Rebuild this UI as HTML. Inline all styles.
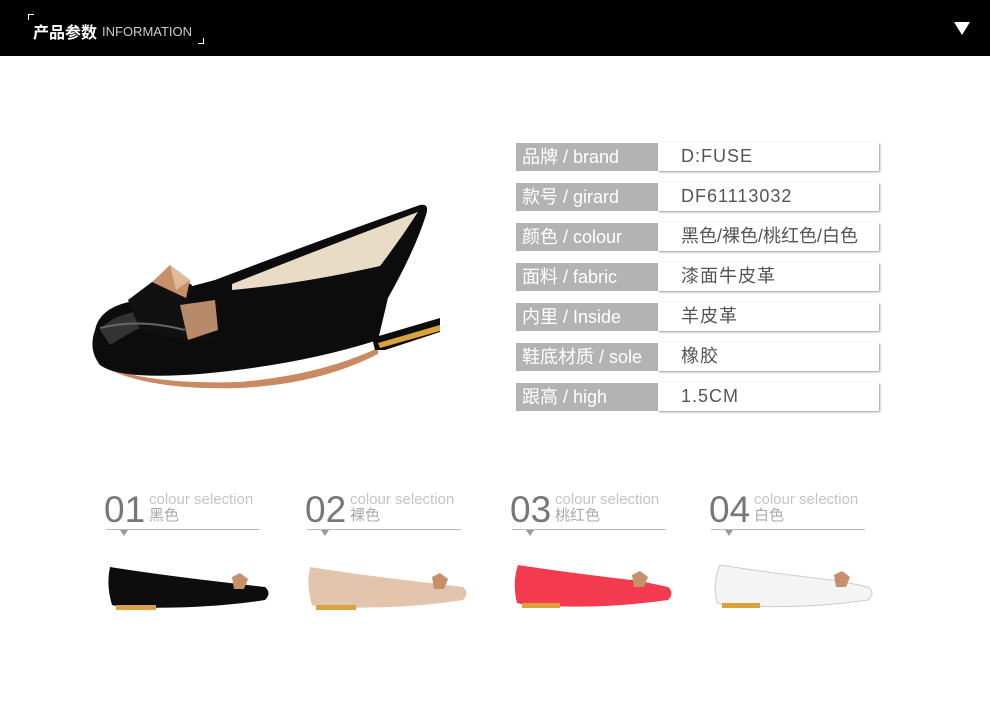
<!DOCTYPE html><html><head><meta charset="utf-8"><style>
body{margin:0;width:990px;height:713px;background:#fff;position:relative;overflow:hidden;font-family:"Liberation Sans","Noto Sans CJK SC",sans-serif}
.hd{position:absolute;left:0;top:0;width:990px;height:56px;background:#000}
.row{position:absolute;left:516px;height:28px}
.lab{position:absolute;left:0;top:0;width:142px;height:28px;background:#b3b3b3;color:#fff;font-size:18px;line-height:28px;padding-left:6px;box-sizing:border-box}
.val{position:absolute;left:142px;top:0;width:221px;height:28px;background:#fff;box-shadow:1px 1px 2px #999;color:#555;font-size:18px;line-height:26px;padding-left:23px;box-sizing:border-box;letter-spacing:1px}
.sel{position:absolute;top:490px;width:160px;height:50px}
.num{position:absolute;left:0;top:0;font-size:37px;color:#777;line-height:40px}
.t1{position:absolute;left:45px;top:2px;font-size:15px;color:#c4c4c4;line-height:16px}
.t2{position:absolute;left:45px;top:18px;font-size:15px;color:#aaa;line-height:16px}
.ln{position:absolute;left:2px;top:39px;width:154px;height:1px;background:#bbb}
.tr{position:absolute;left:16px;top:40px;width:0;height:0;border-left:4px solid transparent;border-right:4px solid transparent;border-top:6px solid #999}
</style></head><body>
<div class="hd">
<div style="position:absolute;left:28px;top:14px;width:5px;height:5px;border-left:1px solid #fff;border-top:1px solid #fff"></div>
<div style="position:absolute;left:33px;top:19px;color:#fff;font-size:16px;font-weight:bold">产品参数</div>
<div style="position:absolute;left:102px;top:24px;color:#ccc;font-size:13px">INFORMATION</div>
<div style="position:absolute;left:198px;top:38px;width:5px;height:5px;border-right:1px solid #fff;border-bottom:1px solid #fff"></div>
<div style="position:absolute;left:954px;top:22px;width:0;height:0;border-left:8px solid transparent;border-right:8px solid transparent;border-top:13px solid #fff"></div>
</div>
<svg style="position:absolute;left:0;top:0" width="520" height="420">
<path d="M95,362 Q140,385 240,382 Q320,375 378,348 L378,354 Q320,384 240,388 Q140,391 95,362Z" fill="#c98a62"/>
<path d="M372,338 L440,318 L440,332 L385,350 L375,350Z" fill="#0c0c0c"/>
<path d="M378,343 L440,325 L440,331 L380,348Z" fill="#d9a23c"/>
<path d="M95,330 Q100,305 140,300 L215,280 Q320,240 420,205 Q430,203 426,215 Q415,250 388,298 L378,340 Q300,365 200,374 Q120,380 100,365 Q88,350 95,330Z" fill="#0c0c0c"/>
<path d="M232,284 Q330,245 418,212 Q400,240 380,266 Q300,284 232,290Z" fill="#e8dcc6"/>
<path d="M100,330 Q120,305 180,312 Q150,320 110,345Z" fill="#333"/>
<path d="M128,300 L152,282 L170,272 L192,285 L188,302 L210,305 L195,322 L212,340 L175,338 L140,330Z" fill="#111"/>
<path d="M152,282 L170,265 L190,280 L186,298Z" fill="#c8906a"/>
<path d="M170,265 L190,280 L176,290Z" fill="#e3b996"/>
<path d="M180,305 L215,300 L218,330 L188,340Z" fill="#b98a6a"/>
<path d="M100,328 Q140,318 185,330" stroke="#666" stroke-width="2" fill="none"/>
</svg>
<div class="row" style="top:143px"><div class="lab">品牌 / brand</div><div class="val">D:FUSE</div></div>
<div class="row" style="top:183px"><div class="lab">款号 / girard</div><div class="val">DF61113032</div></div>
<div class="row" style="top:223px"><div class="lab">颜色 / colour</div><div class="val" style="letter-spacing:0">黑色/裸色/桃红色/白色</div></div>
<div class="row" style="top:263px"><div class="lab">面料 / fabric</div><div class="val">漆面牛皮革</div></div>
<div class="row" style="top:303px"><div class="lab">内里 / Inside</div><div class="val">羊皮革</div></div>
<div class="row" style="top:343px"><div class="lab">鞋底材质 / sole</div><div class="val">橡胶</div></div>
<div class="row" style="top:383px"><div class="lab">跟高 / high</div><div class="val">1.5CM</div></div>

<div class="sel" style="left:104px"><div class="num">01</div><div class="t1">colour selection</div><div class="t2">黑色</div><div class="ln"></div><div class="tr"></div></div>
<div class="sel" style="left:305px"><div class="num">02</div><div class="t1">colour selection</div><div class="t2">裸色</div><div class="ln"></div><div class="tr"></div></div>
<div class="sel" style="left:510px"><div class="num">03</div><div class="t1">colour selection</div><div class="t2">桃红色</div><div class="ln"></div><div class="tr"></div></div>
<div class="sel" style="left:709px"><div class="num">04</div><div class="t1">colour selection</div><div class="t2">白色</div><div class="ln"></div><div class="tr"></div></div>

<svg style="position:absolute;left:0;top:555px" width="990" height="65">
<path d="M110 12 Q160 20 230 28 L265 32 Q272 38 265 45 Q200 55 120 52 L112 50 Q106 30 110 12Z" fill="#0d0d0d"/><rect x="116" y="50" width="40" height="5" fill="#d9a23c"/><path d="M232 22 L240 18 L248 24 L244 34 L234 34Z" fill="#c8906a"/>
<path d="M310 12 Q360 20 430 28 L463 32 Q470 38 463 45 Q400 55 320 52 L312 50 Q306 30 310 12Z" fill="#e2c5ac"/><rect x="316" y="50" width="40" height="5" fill="#d9a23c"/><path d="M432 22 L440 18 L448 24 L444 34 L434 34Z" fill="#c8906a"/>
<path d="M518 10 Q570 18 640 26 L668 32 Q675 38 668 45 Q600 55 525 50 L517 48 Q512 28 518 10Z" fill="#f33a4e"/><rect x="522" y="48" width="38" height="5" fill="#d9a23c"/><path d="M632 20 L640 16 L648 22 L644 32 L634 32Z" fill="#c8906a"/>
<path d="M720 10 Q770 18 840 26 L868 32 Q876 38 868 45 Q800 55 725 50 L717 48 Q712 28 720 10Z" fill="#f4f4f4" stroke="#ccc"/><rect x="722" y="48" width="38" height="5" fill="#d9a23c"/><path d="M834 20 L842 16 L850 22 L846 32 L836 32Z" fill="#c8906a"/>
</svg>
</body></html>
